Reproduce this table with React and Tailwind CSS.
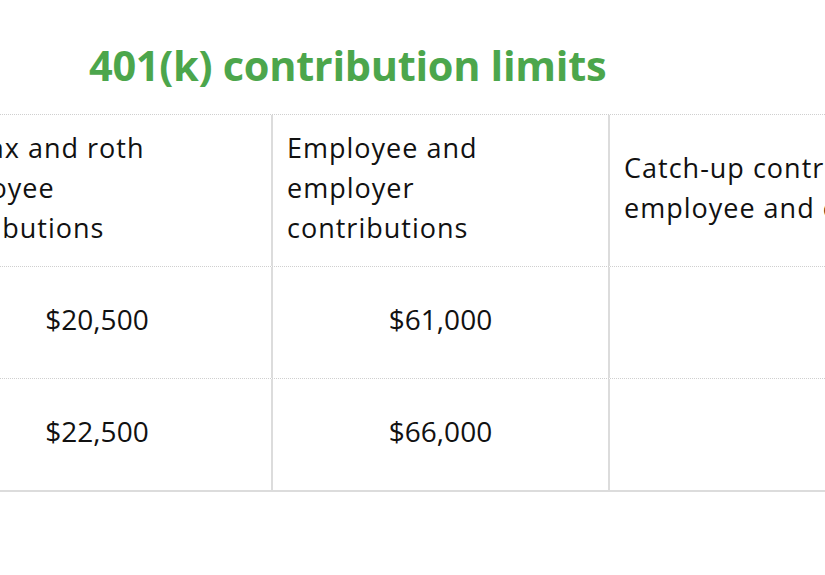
export default function App() {
  const rows = [
    ["$20,500", "$61,000", ""],
    ["$22,500", "$66,000", ""],
  ];

  const headers = [
    ["Pre-tax and roth", "employee", "contributions"],
    ["Employee and", "employer", "contributions"],
    ["Catch-up contributions for", "employee and employer"],
  ];

  return (
    <div className="w-[825px] h-[575px] overflow-hidden bg-white font-['Open_Sans','Noto_Sans',sans-serif] text-[#111]">
      <h1 className="pl-[89px] pt-[37px] text-[41.5px] leading-[56px] font-bold text-[#4ca64c] tracking-[-0.3px] whitespace-nowrap">
        401(k) contribution limits
      </h1>

      {/* table, left part runs off the screen */}
      <div className="mt-[21px] -ml-[77px] w-[1100px]">
        <div className="grid grid-cols-[348px_337px_337px] h-[152px] border-t border-dotted border-[#cfcfcf]">
          {headers.map((lines, j) => (
            <div
              key={j}
              className={`flex flex-col justify-center pb-[6px] text-[27px] leading-[40px] tracking-[1px] whitespace-nowrap ${
                j > 0 ? "pl-[14px] border-l-2 border-l-[#dcdcdc]" : "pl-0"
              }`}
            >
              {lines.map((l) => (
                <span key={l}>{l}</span>
              ))}
            </div>
          ))}
        </div>
        {rows.map((row, i) => (
          <div
            key={i}
            className="grid grid-cols-[348px_337px_337px] h-[112px] border-t border-dotted border-[#cfcfcf]"
          >
            {row.map((v, j) => (
              <div
                key={j}
                className={`flex items-center justify-center pb-[7px] text-[28px] ${j > 0 ? "border-l-2 border-l-[#dcdcdc]" : ""}`}
              >
                {v}
              </div>
            ))}
          </div>
        ))}
        <div className="h-[2px] bg-[#dcdcdc]" />
      </div>
    </div>
  );
}
